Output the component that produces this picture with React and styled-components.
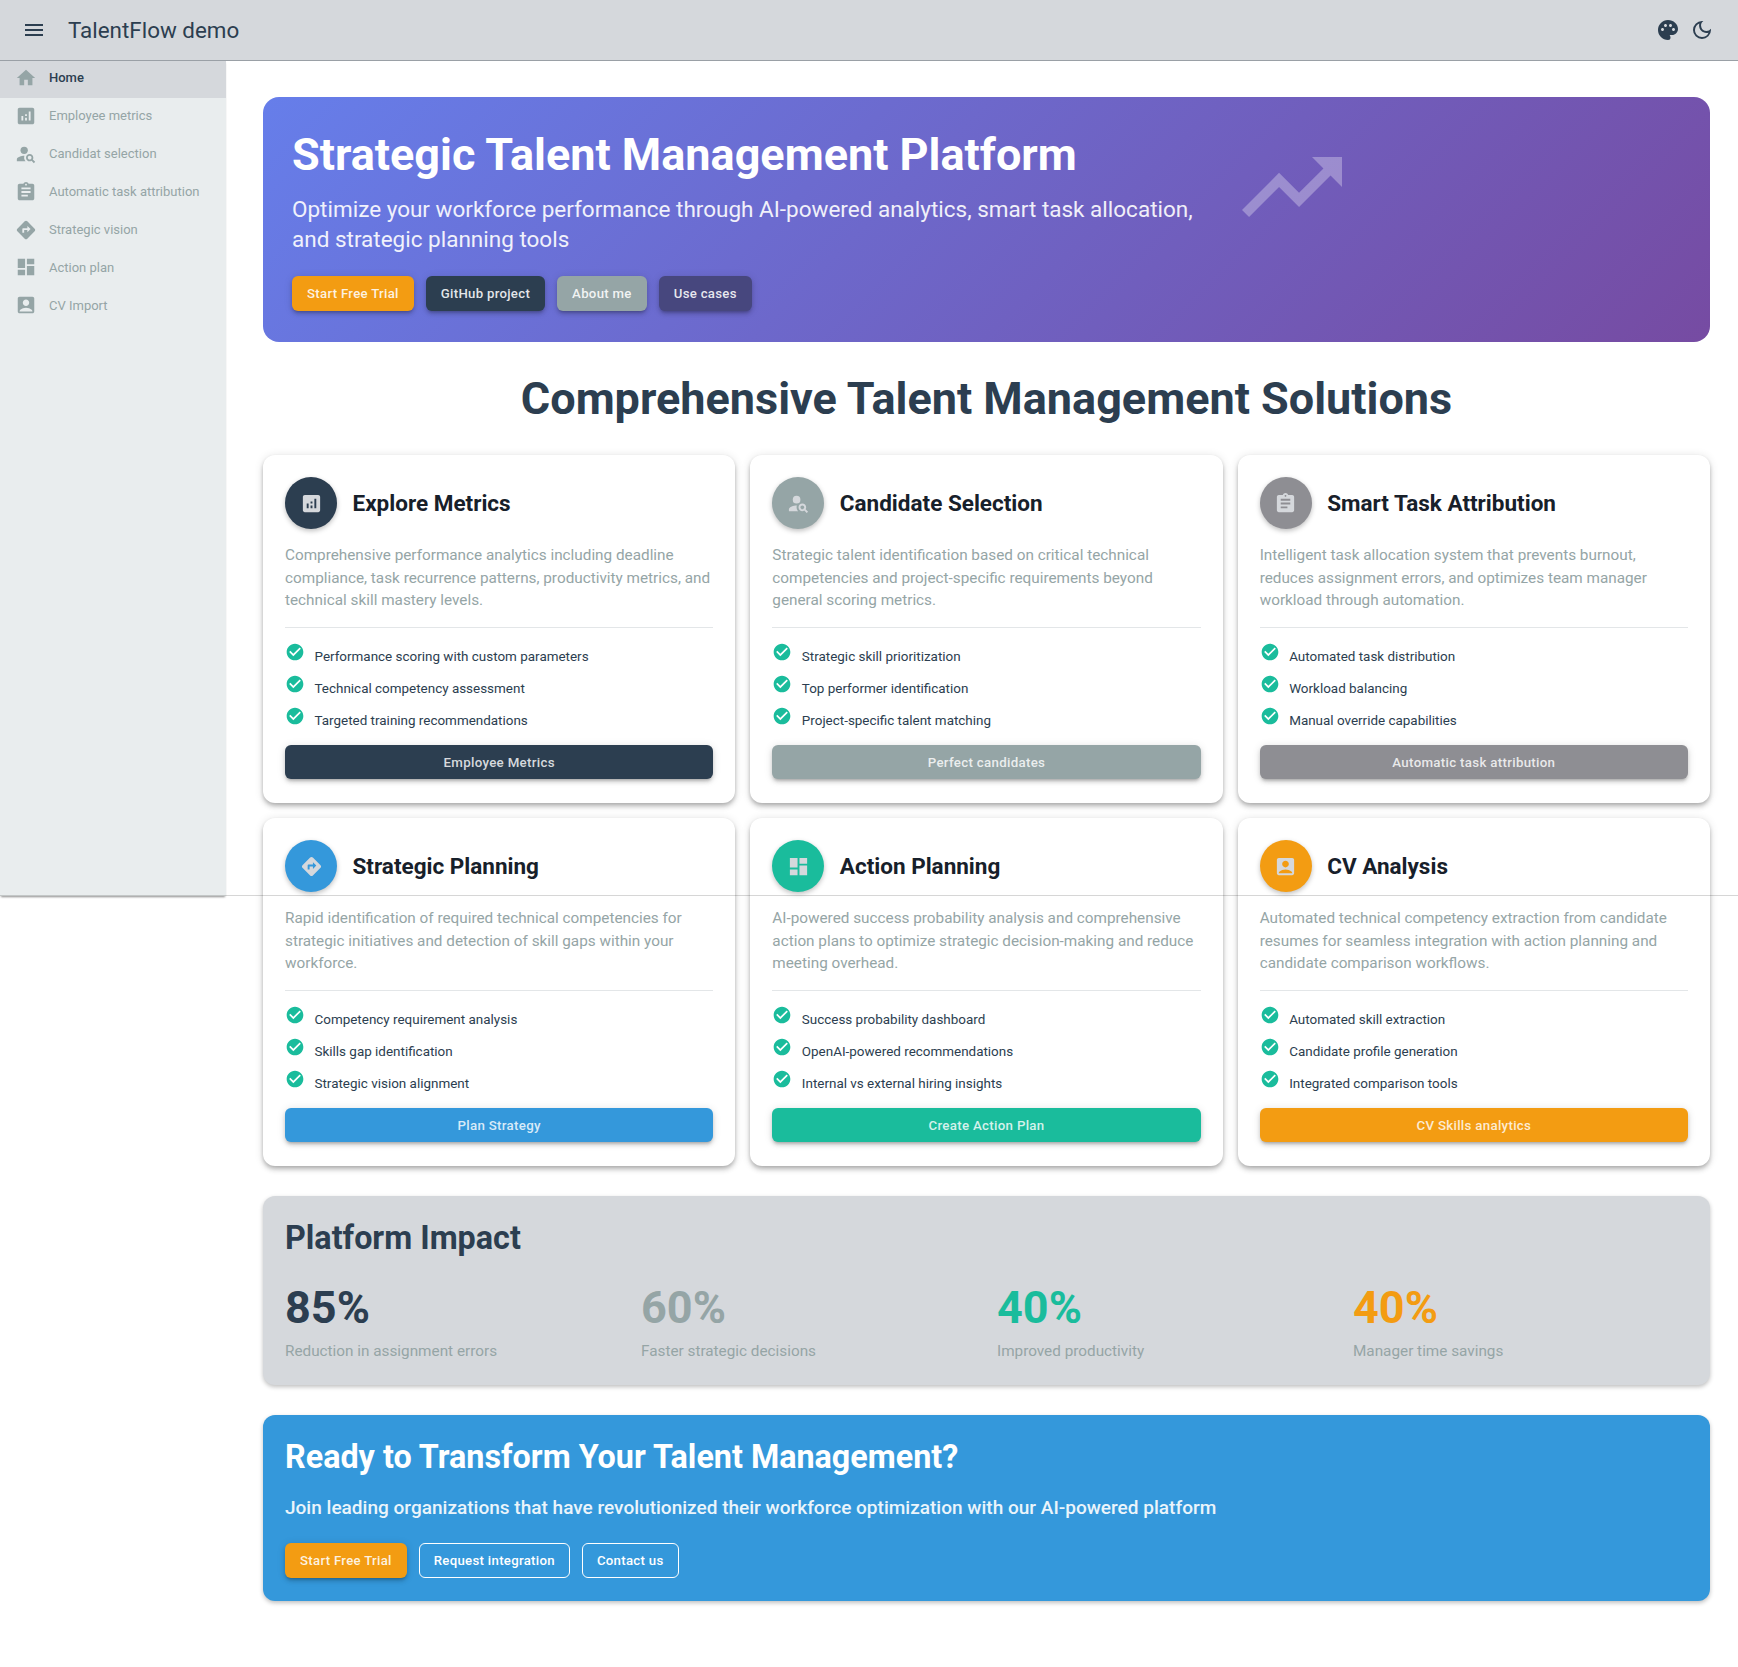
import React from "react";
import styled, { createGlobalStyle } from "styled-components";
import {
  MdMenu, MdPalette, MdOutlineDarkMode, MdHome, MdAnalytics, MdPersonSearch, MdAssignment,
  MdDirections, MdDashboard, MdAccountBox, MdTrendingUp, MdCheckCircle,
} from "react-icons/md";

const GlobalStyle = createGlobalStyle`
  body { margin: 0; background: #fff; font-family: Roboto, sans-serif; }
`;

const navItems = [
  { label: "Home", icon: MdHome, active: true },
  { label: "Employee metrics", icon: MdAnalytics },
  { label: "Candidat selection", icon: MdPersonSearch },
  { label: "Automatic task attribution", icon: MdAssignment },
  { label: "Strategic vision", icon: MdDirections },
  { label: "Action plan", icon: MdDashboard },
  { label: "CV Import", icon: MdAccountBox },
];

const cards = [
  {
    title: "Explore Metrics", color: "#2c3e50", icon: MdAnalytics, button: "Employee Metrics",
    text: "Comprehensive performance analytics including deadline compliance, task recurrence patterns, productivity metrics, and technical skill mastery levels.",
    items: ["Performance scoring with custom parameters", "Technical competency assessment", "Targeted training recommendations"],
  },
  {
    title: "Candidate Selection", color: "#95a5a6", icon: MdPersonSearch, button: "Perfect candidates",
    text: "Strategic talent identification based on critical technical competencies and project-specific requirements beyond general scoring metrics.",
    items: ["Strategic skill prioritization", "Top performer identification", "Project-specific talent matching"],
  },
  {
    title: "Smart Task Attribution", color: "#8e8e93", icon: MdAssignment, button: "Automatic task attribution",
    text: "Intelligent task allocation system that prevents burnout, reduces assignment errors, and optimizes team manager workload through automation.",
    items: ["Automated task distribution", "Workload balancing", "Manual override capabilities"],
  },
  {
    title: "Strategic Planning", color: "#3498db", icon: MdDirections, button: "Plan Strategy",
    text: "Rapid identification of required technical competencies for strategic initiatives and detection of skill gaps within your workforce.",
    items: ["Competency requirement analysis", "Skills gap identification", "Strategic vision alignment"],
  },
  {
    title: "Action Planning", color: "#1abc9c", icon: MdDashboard, button: "Create Action Plan",
    text: "AI-powered success probability analysis and comprehensive action plans to optimize strategic decision-making and reduce meeting overhead.",
    items: ["Success probability dashboard", "OpenAI-powered recommendations", "Internal vs external hiring insights"],
  },
  {
    title: "CV Analysis", color: "#f39c12", icon: MdAccountBox, button: "CV Skills analytics",
    text: "Automated technical competency extraction from candidate resumes for seamless integration with action planning and candidate comparison workflows.",
    items: ["Automated skill extraction", "Candidate profile generation", "Integrated comparison tools"],
  },
];

const stats = [
  { value: "85%", label: "Reduction in assignment errors", color: "#2c3e50" },
  { value: "60%", label: "Faster strategic decisions", color: "#95a5a6" },
  { value: "40%", label: "Improved productivity", color: "#1abc9c" },
  { value: "40%", label: "Manager time savings", color: "#f39c12" },
];

export default function App() {
  return (
    <>
      <GlobalStyle />
      <TopBar>
        <MenuIcon><MdMenu size={24} /></MenuIcon>
        <Brand>TalentFlow demo</Brand>
        <TopIcons>
          <MdPalette size={24} />
          <MdOutlineDarkMode size={24} />
        </TopIcons>
      </TopBar>
      <Drawer>
        {navItems.map((item) => (
          <NavRow key={item.label} $active={item.active}>
            <item.icon size={22} />
            <span>{item.label}</span>
          </NavRow>
        ))}
      </Drawer>
      <FoldLine />
      <Main>
        <Hero>
          <HeroText>
            <HeroTitle>Strategic Talent Management Platform</HeroTitle>
            <HeroSub>Optimize your workforce performance through AI-powered analytics, smart task allocation, and strategic planning tools</HeroSub>
            <ButtonRow>
              <PillButton $bg="#f39c12">Start Free Trial</PillButton>
              <PillButton $bg="#2c3e50">GitHub project</PillButton>
              <PillButton $bg="#95a5a6">About me</PillButton>
              <PillButton $bg="#47477e">Use cases</PillButton>
            </ButtonRow>
          </HeroText>
          <HeroArt><MdTrendingUp size={120} /></HeroArt>
        </Hero>
        <SectionTitle>Comprehensive Talent Management Solutions</SectionTitle>
        <CardGrid>
          {cards.map((card) => (
            <Card key={card.title}>
              <CardHead>
                <IconCircle $color={card.color}><card.icon size={23} /></IconCircle>
                <CardTitle>{card.title}</CardTitle>
              </CardHead>
              <CardText>{card.text}</CardText>
              <Rule />
              <FeatureList>
                {card.items.map((item) => (
                  <Feature key={item}><MdCheckCircle size={20} /><span>{item}</span></Feature>
                ))}
              </FeatureList>
              <CardButton $bg={card.color}>{card.button}</CardButton>
            </Card>
          ))}
        </CardGrid>
        <Impact>
          <ImpactTitle>Platform Impact</ImpactTitle>
          <StatGrid>
            {stats.map((stat) => (
              <div key={stat.label}>
                <StatValue $color={stat.color}>{stat.value}</StatValue>
                <StatLabel>{stat.label}</StatLabel>
              </div>
            ))}
          </StatGrid>
        </Impact>
        <Cta>
          <CtaTitle>Ready to Transform Your Talent Management?</CtaTitle>
          <CtaText>Join leading organizations that have revolutionized their workforce optimization with our AI-powered platform</CtaText>
          <ButtonRow>
            <PillButton $bg="#f39c12">Start Free Trial</PillButton>
            <OutlineButton>Request integration</OutlineButton>
            <OutlineButton>Contact us</OutlineButton>
          </ButtonRow>
        </Cta>
      </Main>
    </>
  );
}

const TopBar = styled.header`
  position: relative;
  z-index: 2;
  height: 61px;
  box-sizing: border-box;
  display: flex;
  align-items: center;
  padding: 0 24px 0 22px;
  background: #d5d8dc;
  border-bottom: 1px solid #9aa0a6;
  color: #2c3e50;
`;

const MenuIcon = styled.div`
  display: flex;
  margin-right: 22px;
`;

const Brand = styled.div`
  font-size: 22.4px;
  font-weight: 400;
`;

const TopIcons = styled.div`
  margin-left: auto;
  display: flex;
  gap: 10px;
`;

const Drawer = styled.nav`
  position: absolute;
  top: 60px;
  left: 0;
  width: 226px;
  height: 836px;
  background: #e9edee;
  box-shadow: 0 2px 2px -1px rgba(0, 0, 0, 0.45);
`;

const NavRow = styled.div`
  height: 37.9px;
  box-sizing: border-box;
  padding: 0 0 2px 15px;
  display: flex;
  align-items: center;
  gap: 12px;
  font-size: 13px;
  font-weight: ${(p) => (p.$active ? 500 : 400)};
  color: ${(p) => (p.$active ? "#2c3e50" : "#95a5a6")};
  background: ${(p) => (p.$active ? "#d5d8dc" : "transparent")};

  svg {
    color: #95a5a6;
  }
`;

/* thin grey line that runs across the whole page at the fold */
const FoldLine = styled.div`
  position: absolute;
  top: 895px;
  left: 0;
  right: 0;
  height: 1px;
  background: rgba(0, 0, 0, 0.16);
  z-index: 3;
`;

const Main = styled.main`
  margin-left: 226px;
  padding: 36px 28px 60px 37px;
`;

const Hero = styled.section`
  height: 245px;
  box-sizing: border-box;
  border-radius: 16px;
  padding: 30px 30px 30px 29px;
  display: flex;
  color: #fff;
  background: linear-gradient(135deg, #667eea 0%, #764ba2 100%);
`;

const HeroText = styled.div`
  width: 920px;
`;

const HeroTitle = styled.h1`
  margin: 2px 0 13px;
  font-size: 45px;
  font-weight: 700;
  line-height: 52px;
`;

const HeroSub = styled.p`
  margin: 0 0 22px;
  font-size: 22.5px;
  line-height: 30px;
  opacity: 0.9;
`;

const ButtonRow = styled.div`
  display: flex;
  gap: 12px;
`;

const PillButton = styled.button`
  height: 35px;
  padding: 0 15px;
  border: none;
  border-radius: 6px;
  background: ${(p) => p.$bg};
  color: rgba(255, 255, 255, 0.88);
  font: 500 13.2px Roboto, sans-serif;
  letter-spacing: 0.3px;
  box-shadow: 0 3px 3px -2px rgba(0, 0, 0, 0.2), 0 3px 4px rgba(0, 0, 0, 0.14), 0 1px 8px rgba(0, 0, 0, 0.12);
`;

const OutlineButton = styled(PillButton)`
  padding: 0 14px;
  background: transparent;
  border: 1px solid #fff;
  box-shadow: none;
  color: #fff;
`;

const HeroArt = styled.div`
  margin-left: 20px;
  height: 120px;
  color: rgba(255, 255, 255, 0.3);
`;

const SectionTitle = styled.h2`
  margin: 29px 0 28px;
  text-align: center;
  font-size: 45px;
  line-height: 56px;
  font-weight: 700;
  color: #2c3e50;
`;

const CardGrid = styled.div`
  display: grid;
  grid-template-columns: repeat(3, 1fr);
  gap: 15px;
`;

const Card = styled.article`
  box-sizing: border-box;
  height: 348px;
  padding: 22px;
  border-radius: 12px;
  background: #fff;
  box-shadow: 0 2px 4px -1px rgba(0, 0, 0, 0.2), 0 4px 5px rgba(0, 0, 0, 0.14), 0 1px 10px rgba(0, 0, 0, 0.12);
`;

const CardHead = styled.div`
  display: flex;
  align-items: center;
  gap: 15.5px;
  margin-bottom: 15px;
`;

const IconCircle = styled.div`
  width: 52px;
  height: 52px;
  border-radius: 50%;
  display: flex;
  align-items: center;
  justify-content: center;
  color: #d5d8dc;
  background: ${(p) => p.$color};
  box-shadow: 0 2px 5px rgba(0, 0, 0, 0.25);
`;

const CardTitle = styled.h3`
  margin: 0;
  font-size: 22.5px;
  font-weight: 700;
  color: #17202a;
`;

const CardText = styled.p`
  margin: 0 0 15px;
  font-size: 15.3px;
  line-height: 22.5px;
  color: #95a5a6;
`;

const Rule = styled.hr`
  margin: 0 0 12.5px;
  border: none;
  border-top: 1px solid #e3e6e8;
`;

const FeatureList = styled.ul`
  margin: 0 0 9px;
  padding: 0;
  list-style: none;
`;

const Feature = styled.li`
  display: flex;
  align-items: center;
  gap: 9.5px;
  height: 32px;
  font-size: 13.45px;
  color: #2c3e50;

  svg {
    color: #1abc9c;
    margin-top: -8px;
  }
`;

const CardButton = styled.button`
  width: 100%;
  height: 34px;
  border: none;
  border-radius: 6px;
  background: ${(p) => p.$bg};
  color: rgba(255, 255, 255, 0.82);
  font: 500 13.3px Roboto, sans-serif;
  letter-spacing: 0.3px;
  box-shadow: 0 3px 3px -2px rgba(0, 0, 0, 0.2), 0 3px 4px rgba(0, 0, 0, 0.14), 0 1px 8px rgba(0, 0, 0, 0.12);
`;

const Impact = styled.section`
  box-sizing: border-box;
  height: 189px;
  margin-top: 30px;
  padding: 22px;
  border-radius: 12px;
  background: #d5d8dc;
  box-shadow: 0 2px 4px rgba(0, 0, 0, 0.25);
`;

const ImpactTitle = styled.h2`
  margin: 0 0 24px;
  font-size: 32.3px;
  line-height: 40px;
  font-weight: 700;
  color: #2c3e50;
`;

const StatGrid = styled.div`
  display: grid;
  grid-template-columns: repeat(4, 1fr);
  column-gap: 21px;
`;

const StatValue = styled.div`
  font-size: 45px;
  line-height: 52px;
  font-weight: 700;
  color: ${(p) => p.$color};
`;

const StatLabel = styled.div`
  margin-top: 8px;
  font-size: 15.3px;
  line-height: 19px;
  color: #95a5a6;
`;

const Cta = styled.section`
  box-sizing: border-box;
  height: 186px;
  margin-top: 30px;
  padding: 22px;
  border-radius: 12px;
  color: #fff;
  background: #3498db;
  box-shadow: 0 2px 4px rgba(0, 0, 0, 0.25);
`;

const CtaTitle = styled.h2`
  margin: 0 0 17px;
  font-size: 32.3px;
  line-height: 40px;
  font-weight: 700;
`;

const CtaText = styled.p`
  margin: 0 0 21px;
  font-size: 19.05px;
  line-height: 28px;
  font-weight: 500;
  opacity: 0.9;
`;
